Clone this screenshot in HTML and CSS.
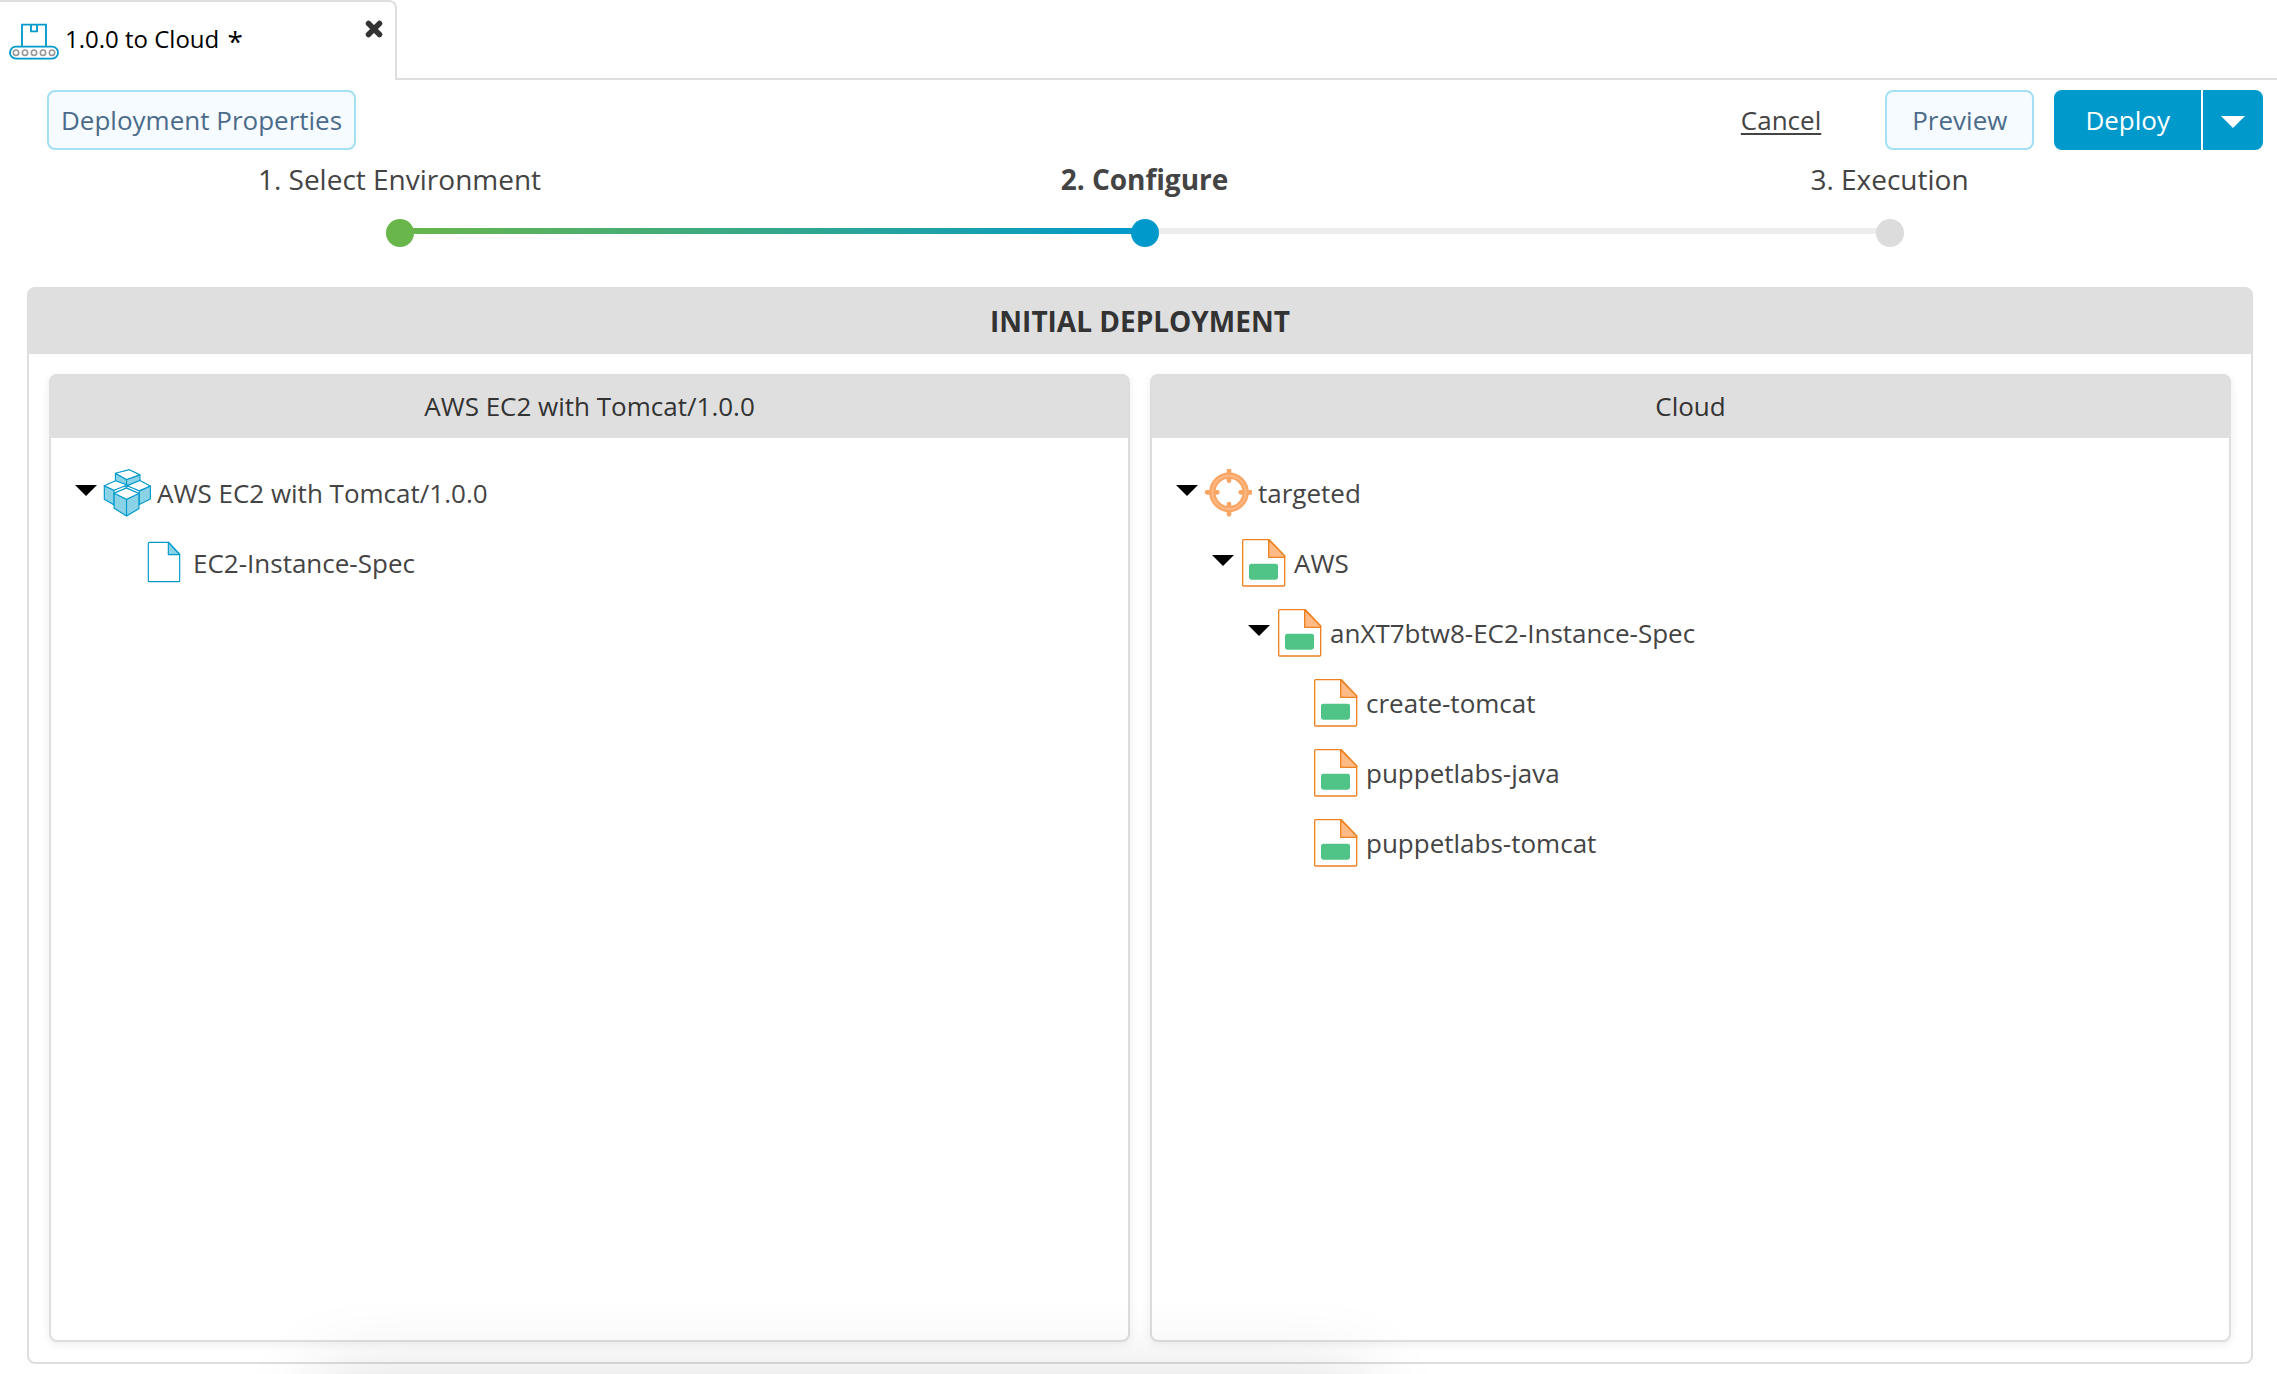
FILE: index.html
```html
<!DOCTYPE html>
<html lang="en">
<head>
<meta charset="utf-8">
<title>1.0.0 to Cloud</title>
<link rel="stylesheet" href="styles.css">
</head>
<body>
<svg class="sprite" aria-hidden="true">
  <symbol id="caret" viewBox="0 0 22 11"><path d="M0 0h22L11 11z" fill="currentColor"/></symbol>
  <symbol id="package" viewBox="129 56 147 147">
    <g stroke="#09c" stroke-width="3.5" stroke-linejoin="round">
      <path d="M167 69v36l34 6 41-20V74l-41 14z" fill="#8ad2e6"/>
      <path d="M201 88v18" fill="none"/>
      <path d="M167 69l43-11 32 16-41 14z" fill="#fff"/>
      <path d="M133 107v42l30 17v-45z" fill="#8ad2e6"/>
      <path d="M133 107l34-15 36 13-40 16z" fill="#fff"/>
      <path d="M274 108v40l-34 17v-42z" fill="#8ad2e6"/>
      <path d="M274 108l-32-17-39 16 37 16z" fill="#fff"/>
      <path d="M163 130v46l38 24 38-22v-47l-38-17z" fill="#8ad2e6"/>
      <path d="M201 149v51" fill="none"/>
      <path d="M163 130l38-16 38 17-38 18z" fill="#fff"/>
    </g>
  </symbol>
  <symbol id="spec" viewBox="237 267 144 144">
    <path d="M268 277h58l33 36v79q0 3-3 3h-88q-3 0-3-3V280q0-3 3-3z" fill="#fff" stroke="#09c" stroke-width="3.5"/>
    <path d="M325 277v37h34z" fill="#8ad2e6" stroke="#09c" stroke-width="3.5" stroke-linejoin="round"/>
  </symbol>
  <symbol id="target" viewBox="132 56 144 144">
    <g fill="none" stroke="#f9a665">
      <circle cx="207" cy="126" r="50" stroke-width="19"/>
      <path d="M207 60v31M207 161v31M141 126h31M242 126h31" stroke-width="14" stroke-linecap="round"/>
      <circle cx="207" cy="126" r="50" stroke="#fdb883" stroke-width="6"/>
    </g>
  </symbol>
  <symbol id="resource" viewBox="240 267 144 144">
    <path d="M251 269h77l46 49v87q0 3-3 3H251q-3 0-3-3V272q0-3 3-3z" fill="#fff" stroke="#ee8120" stroke-width="4"/>
    <path d="M326 269v53h48v-4z" fill="#ffba86" stroke="#ee8120" stroke-width="4" stroke-linejoin="round"/>
    <rect x="267" y="341" width="87" height="48" rx="7" fill="#4fc486"/>
  </symbol>
</svg>

<header class="tabs">
  <div class="tab">
    <svg class="tab-icon" viewBox="27 67 150 111" aria-hidden="true">
      <g fill="none" stroke="#09c" stroke-width="5.5">
        <path d="M66 138V72h72v66M93 72v20h18V72"/>
        <rect x="30" y="138" width="144" height="36" rx="18"/>
      </g>
      <g fill="none" stroke="#999" stroke-width="5">
        <circle cx="48" cy="156" r="8"/><circle cx="75" cy="156" r="8"/><circle cx="102" cy="156" r="8"/><circle cx="129" cy="156" r="8"/><circle cx="156" cy="156" r="8"/>
      </g>
    </svg>
    <span class="tab-title">1.0.0 to Cloud <span class="dirty">*</span></span>
    <button class="tab-close" type="button" aria-label="Close tab">
      <svg viewBox="0 0 18 18" aria-hidden="true"><path d="M3.500 3.500l11 11M14.500 3.500l-11 11" stroke="#333" stroke-width="5.500" stroke-linecap="round"/></svg>
    </button>
  </div>
</header>

<main class="page">
  <div class="toolbar">
    <button class="btn" type="button">Deployment Properties</button>
    <div class="actions">
      <a class="cancel" href="#">Cancel</a>
      <button class="btn btn-wide" type="button">Preview</button>
      <div class="split">
        <button class="primary" type="button">Deploy</button>
        <button class="primary primary-menu" type="button" aria-label="More deploy options"><svg class="caret" aria-hidden="true"><use href="#caret"/></svg></button>
      </div>
    </div>
  </div>

  <ol class="steps">
    <li class="step done">1. Select Environment</li>
    <li class="step current">2. Configure</li>
    <li class="step">3. Execution</li>
  </ol>

  <section class="panel deployment">
    <h1 class="panel-title">INITIAL DEPLOYMENT</h1>
    <div class="columns">
      <section class="panel column">
        <h2 class="column-title">AWS EC2 with Tomcat/1.0.0</h2>
        <ul class="tree">
          <li>
            <div class="node"><button class="toggle" type="button" aria-label="Collapse"><svg class="caret" aria-hidden="true"><use href="#caret"/></svg></button><svg class="icon" aria-hidden="true"><use href="#package"/></svg><span>AWS EC2 with Tomcat/1.0.0</span></div>
            <ul>
              <li><div class="node leaf"><svg class="icon" aria-hidden="true"><use href="#spec"/></svg><span>EC2-Instance-Spec</span></div></li>
            </ul>
          </li>
        </ul>
      </section>
      <section class="panel column">
        <h2 class="column-title">Cloud</h2>
        <ul class="tree">
          <li>
            <div class="node"><button class="toggle" type="button" aria-label="Collapse"><svg class="caret" aria-hidden="true"><use href="#caret"/></svg></button><svg class="icon" aria-hidden="true"><use href="#target"/></svg><span>targeted</span></div>
            <ul>
              <li>
                <div class="node"><button class="toggle" type="button" aria-label="Collapse"><svg class="caret" aria-hidden="true"><use href="#caret"/></svg></button><svg class="icon" aria-hidden="true"><use href="#resource"/></svg><span>AWS</span></div>
                <ul>
                  <li>
                    <div class="node"><button class="toggle" type="button" aria-label="Collapse"><svg class="caret" aria-hidden="true"><use href="#caret"/></svg></button><svg class="icon" aria-hidden="true"><use href="#resource"/></svg><span>anXT7btw8-EC2-Instance-Spec</span></div>
                    <ul>
                      <li><div class="node leaf"><svg class="icon" aria-hidden="true"><use href="#resource"/></svg><span>create-tomcat</span></div></li>
                      <li><div class="node leaf"><svg class="icon" aria-hidden="true"><use href="#resource"/></svg><span>puppetlabs-java</span></div></li>
                      <li><div class="node leaf"><svg class="icon" aria-hidden="true"><use href="#resource"/></svg><span>puppetlabs-tomcat</span></div></li>
                    </ul>
                  </li>
                </ul>
              </li>
            </ul>
          </li>
        </ul>
      </section>
    </div>
  </section>
</main>
<div class="drawer-shadow"></div>
</body>
</html>
```
FILE: styles.css
```css
* { box-sizing: border-box; }

body {
  margin: 0;
  min-height: 100vh;
  display: flex;
  flex-direction: column;
  background: #fff;
  color: #444;
  font: 26px/36px "Open Sans", "Noto Sans", sans-serif;
}

button {
  margin: 0;
  padding: 0;
  border: 0;
  background: none;
  color: inherit;
  font: inherit;
  cursor: pointer;
}

ul, ol { margin: 0; padding: 0; list-style: none; }

.sprite { position: absolute; width: 0; height: 0; }

/* Tabs */
.tabs { display: flex; height: 80px; }
.tabs::after { content: ""; flex: 1; border-bottom: 2px solid #dedede; }

.tab {
  display: flex;
  align-items: flex-start;
  width: 397px;
  padding: 19px 12px 0 9px;
  border: solid #dedede;
  border-width: 2px 2px 0 0;
  border-radius: 0 8px 0 0;
  color: #000;
}
.tab-icon { width: 50px; height: 37px; margin: 2px 6px 0 0; }
.tab-title { flex: 1; font-size: 24px; }
.dirty { margin-left: 2px; font-size: 28px; font-weight: 500; line-height: 24px; vertical-align: -4px; }
.tab-close { display: flex; margin-top: -1px; }
.tab-close svg { width: 18px; height: 18px; }

/* Toolbar */
.page { flex: 1; display: flex; flex-direction: column; }

.toolbar {
  display: flex;
  justify-content: space-between;
  padding: 10px 14px 0 47px;
}
.actions { display: flex; align-items: center; }

.btn {
  height: 60px;
  padding: 0 12px 1px;
  border: 2px solid #a4e0f3;
  border-radius: 8px;
  background: #f5fbff;
  color: #4c6b8a;
}
.btn-wide { padding: 0 25px 1px; }
.cancel { margin-right: 64px; color: #444; text-underline-offset: 3px; }

.split { display: flex; gap: 2px; margin-left: 20px; }
.primary {
  height: 60px;
  padding: 0 31px 1px;
  border-radius: 8px 0 0 8px;
  background: #09c;
  color: #fff;
  font-weight: 500;
}
.primary-menu { padding: 4px 18px 0; border-radius: 0 8px 8px 0; }
.caret { display: block; width: 22px; height: 11px; }
.primary-menu .caret { width: 24px; height: 12px; }

/* Wizard steps */
.steps { display: flex; padding: 11px 15px 0 27px; isolation: isolate; }
.step {
  flex: 1;
  position: relative;
  font-size: 28px;
  text-align: center;
}
.step::after {
  content: "";
  display: block;
  width: 28px;
  height: 28px;
  margin: 22px auto 0;
  border-radius: 50%;
  background: #dcdcdc;
}
.step + .step::before {
  content: "";
  position: absolute;
  z-index: -1;
  right: 50%;
  bottom: 13px;
  width: 100%;
  height: 6px;
  background: #ededed;
}
.step.current { font-weight: 700; }
.step.done::after { background: #69b64a; }
.step.current::after { background: #09c; }
.step.current::before { background: linear-gradient(to right, #69b64a, #09c); }

/* Panels */
.panel {
  display: flex;
  flex-direction: column;
  border: 2px solid #dedede;
  border-radius: 8px;
  background: #fff;
}
.deployment { flex: 1; margin: 40px 24px 10px 27px; }

.panel-title, .column-title {
  margin: 0;
  background: #dfdfdf;
  color: #333;
  text-align: center;
}
.panel-title { padding-bottom: 1px; font-size: 28px; line-height: 64px; }
.column-title { padding-bottom: 2px; font-size: 26px; font-weight: 400; line-height: 60px; }

.columns { flex: 1; display: flex; gap: 20px; padding: 20px; }
.column { flex: 1; box-shadow: 0 2px 10px rgba(0, 0, 0, 0.07); }

/* Trees */
.tree { padding: 20px 24px; }
.tree ul { padding-left: 36px; }
.node { display: flex; align-items: center; height: 70px; }
.leaf { padding-left: 28px; }
.toggle { width: 28px; height: 18px; margin-bottom: 6px; color: #000; }
.icon { width: 48px; height: 48px; margin-right: 6px; }

/* Shadow of the drawer that is parked under the window's lower edge */
.drawer-shadow {
  position: fixed;
  left: 14%;
  right: 40%;
  top: 100%;
  height: 100px;
  box-shadow: 0 0 80px rgba(0, 0, 0, 0.13);
  pointer-events: none;
}
```
